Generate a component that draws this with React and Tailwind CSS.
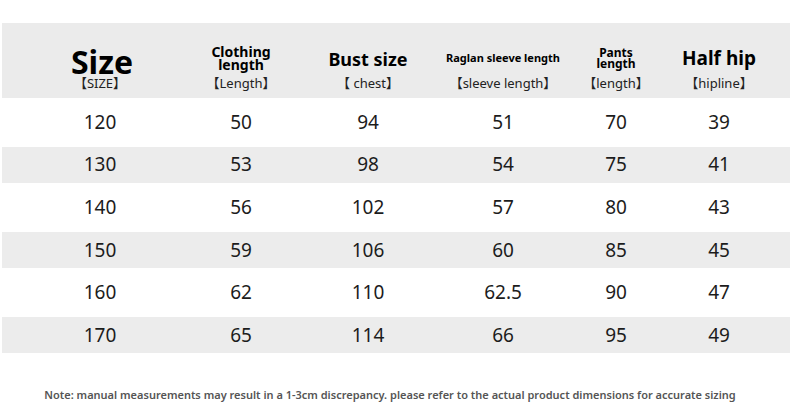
import React from 'react';

const COLS = 'grid grid-cols-[140px_142px_112px_158px_68px_138px]';

const rows = [
  ['120', '50', '94', '51', '70', '39'],
  ['130', '53', '98', '54', '75', '41'],
  ['140', '56', '102', '57', '80', '43'],
  ['150', '59', '106', '60', '85', '45'],
  ['160', '62', '110', '62.5', '90', '47'],
  ['170', '65', '114', '66', '95', '49'],
];

const headers = [
  { title: 'Size', cls: 'text-[32px] leading-[26px] pt-[8px] pl-[4px]', sub: '【SIZE】' },
  { title: <>Clothing<br />length</>, cls: 'text-[14px] leading-[13px]', sub: '【Length】' },
  { title: 'Bust size', cls: 'text-[18px] leading-[16px] pt-[2px]', sub: '【 chest】' },
  { title: 'Raglan sleeve length', cls: 'text-[11px] leading-none', sub: '【sleeve length】' },
  { title: <>Pants<br />length</>, cls: 'text-[12px] leading-[11px]', sub: '【length】' },
  { title: 'Half hip', cls: 'text-[19px] leading-[17px] pt-[2px]', sub: '【hipline】' },
];

const font = { fontFamily: '"Noto Sans", "Noto Sans CJK SC", sans-serif' };

export default function App() {
  return (
    <div className="w-[790px] h-[420px] bg-white text-[#111] overflow-hidden" style={font}>
      {/* Header band */}
      <div className="pt-[23px] pl-[2px]">
        <div className={`${COLS} h-[75px] bg-[#ebebeb] pl-[28px]`}>
          {headers.map((h, i) => (
            <div key={i} className="flex flex-col items-center">
              <div className="h-[52px] flex items-center justify-center pt-[17px]">
                <div className={`font-bold text-center text-black ${h.cls}`}>{h.title}</div>
              </div>
              <div className="text-[13px] leading-[16px] text-[#222] whitespace-nowrap">{h.sub}</div>
            </div>
          ))}
        </div>
      </div>

      {/* Body rows */}
      <div className="pl-[2px] pt-[3px]">
        {rows.map((r, i) => (
          <div key={i} className="h-[42.6px] py-[3.5px]">
            <div className={`${COLS} h-full pl-[28px] items-center ${i % 2 === 1 ? 'bg-[#ececec]' : ''}`}>
              {r.map((v, j) => (
                <div key={j} className="text-center text-[19px] leading-none text-[#1c1c1c]">{v}</div>
              ))}
            </div>
          </div>
        ))}
      </div>

      {/* Note */}
      <div className="pt-[30px] pr-[10px] text-center text-[11px] font-semibold text-[#555]">
        Note: manual measurements may result in a 1-3cm discrepancy. please refer to the actual product dimensions for accurate sizing
      </div>
    </div>
  );
}
